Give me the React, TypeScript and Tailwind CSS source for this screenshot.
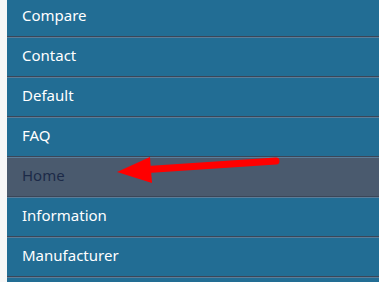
const ITEMS = ["Compare", "Contact", "Default", "FAQ", "Home", "Information", "Manufacturer", ""];

export default function App() {
    return (
        <div className="relative w-[379px] h-[282px] overflow-hidden bg-[#f7f7f7] pl-[7px] font-['Noto_Sans',sans-serif]">
            <ul className="-mt-[2px]">
                {ITEMS.map((name, i) => {
                    const active = name === "Home";
                    return (
                        <li
                            key={i}
                            className={`h-[40px] flex items-center pl-[15px] text-[15px] border-b border-b-[#5b7d99] shadow-[inset_0_-1px_0_#3b4658] ${
                                active ? "bg-[#4a5a6e] text-[#1c2a48]" : "bg-[#226d94] text-white"
                            }`}
                        >
                            <span className="-mt-[4px]">{name}</span>
                        </li>
                    );
                })}
            </ul>

            {/* red arrow pointing at Home */}
            <svg className="absolute left-0 top-0" width="379" height="282" viewBox="0 0 379 282">
                <line x1="276" y1="161" x2="148" y2="169.5" stroke="#ff0000" strokeWidth="7" strokeLinecap="round" />
                <polygon points="117,172 150,157 152,183" fill="#ff0000" />
            </svg>
        </div>
    );
}
